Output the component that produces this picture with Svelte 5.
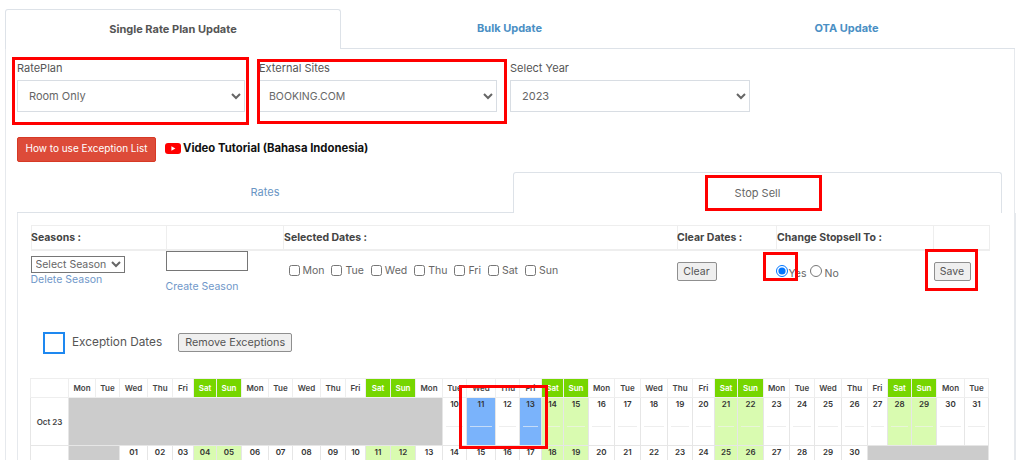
<script>
	const edges = [31, 69, 96, 120, 148, 173, 194, 217, 242, 269, 293, 321, 346, 366, 391, 416, 443, 467, 496, 520, 542, 564, 589, 615, 641, 668, 693, 715, 738, 764, 790, 815, 842, 868, 888, 912, 937, 965, 989];
	const widths = edges.slice(1).map((x, i) => x - edges[i]);
	const names = ['Mon', 'Tue', 'Wed', 'Thu', 'Fri', 'Sat', 'Sun'];
	const head = widths.slice(1).map((_, i) => names[i % 7]);
	const weekend = (col) => col % 7 === 5 || col % 7 === 6;
	const pad = (n) => String(n).padStart(2, '0');

	function days(from, to, startCol) {
		const out = [];
		for (let d = from; d <= to; d++) {
			out.push({ label: pad(d), col: startCol + d - from, selected: from === 10 && (d === 11 || d === 13) });
		}
		return out;
	}
	const october = days(10, 31, 15);
	const november = days(1, 30, 2);
</script>

<div class="page">
	<div class="tabs">
		<div class="tab active">Single Rate Plan Update</div>
		<div class="tab">Bulk Update</div>
		<div class="tab">OTA Update</div>
	</div>

	<div class="panel">
		<div class="filters">
			<div class="field one">
				<span class="field-label">RatePlan</span>
				<select><option>Room Only</option></select>
			</div>
			<div class="field two">
				<span class="field-label">External Sites</span>
				<select><option>BOOKING.COM</option></select>
			</div>
			<div class="field three">
				<span class="field-label">Select Year</span>
				<select><option>2023</option></select>
			</div>
		</div>

		<div class="help">
			<button class="red-btn">How to use Exception List</button>
			<svg class="yt" width="16" height="11" viewBox="0 0 16 11">
				<rect width="16" height="11" rx="3" fill="#f00" />
				<path d="M6.4 3.2v4.6l4-2.3z" fill="#fff" />
			</svg>
			<span class="video">Video Tutorial (Bahasa Indonesia)</span>
		</div>

		<div class="subtabs">
			<div class="subtab">Rates</div>
			<div class="subtab active">Stop Sell</div>
		</div>

		<div class="subpanel">
			<table class="controls">
				<colgroup>
					<col style="width:135px" />
					<col style="width:117px" />
					<col style="width:394px" />
					<col style="width:99px" />
					<col style="width:157px" />
					<col style="width:56px" />
				</colgroup>
				<thead>
					<tr>
						<th class="flush">Seasons :</th>
						<th></th>
						<th>Selected Dates :</th>
						<th class="flush">Clear Dates :</th>
						<th>Change Stopsell To :</th>
						<th></th>
					</tr>
				</thead>
				<tbody>
					<tr>
						<td>
							<select class="season"><option>Select Season</option></select>
							<div class="link delete">Delete Season</div>
						</td>
						<td>
							<input class="season-name" type="text" />
							<div class="link create">Create Season</div>
						</td>
						<td>
							<div class="weekdays">
								{#each names as name}
									<label><input type="checkbox" />{name}</label>
								{/each}
							</div>
						</td>
						<td><button class="plain clear">Clear</button></td>
						<td>
							<div class="radios">
								<input type="radio" name="stopsell" checked /><span>Yes</span>
								<input type="radio" name="stopsell" /><span>No</span>
							</div>
						</td>
						<td><button class="plain save">Save</button></td>
					</tr>
				</tbody>
			</table>

			<div class="exceptions">
				<span class="swatch"></span>
				<span class="exc-label">Exception Dates</span>
				<button class="plain remove">Remove Exceptions</button>
			</div>

			<table class="calendar">
				<colgroup>
					{#each widths as w}
						<col style="width:{w}px" />
					{/each}
				</colgroup>
				<thead>
					<tr>
						<th></th>
						{#each head as name, i}
							<th class:wk={weekend(i)}>{name}</th>
						{/each}
					</tr>
				</thead>
				<tbody>
					<tr class="week">
						<td class="month">Oct 23</td>
						<td class="past" colspan="15"></td>
						{#each october as d}
							<td class="day" class:green={weekend(d.col)} class:picked={d.selected}>
								{d.label}<i></i>
							</td>
						{/each}
					</tr>
					<tr class="week">
						<td class="month"></td>
						<td class="past" colspan="2"></td>
						{#each november as d}
							<td class="day" class:green={weekend(d.col)}>{d.label}<i></i></td>
						{/each}
						<td class="past" colspan="5"></td>
					</tr>
				</tbody>
			</table>
		</div>
	</div>

	<span class="mark m1"></span>
	<span class="mark m2"></span>
	<span class="mark m3"></span>
	<span class="mark m4"></span>
	<span class="mark m5"></span>
	<span class="mark m6"></span>
</div>

<style>
	:global(body) {
		margin: 0;
		background: #fff;
	}
	.page {
		position: relative;
		width: 1024px;
		height: 460px;
		overflow: hidden;
		box-sizing: border-box;
		padding: 9px 0 0 5px;
		font-family: Inter, "Open Sans", sans-serif;
		font-size: 11px;
		color: #555;
	}
	.tabs {
		display: grid;
		grid-template-columns: 336px 337px 337px;
		width: 1010px;
	}
	.tab {
		height: 39px;
		line-height: 38px;
		text-align: center;
		font-weight: 700;
		font-size: 11px;
		color: #4a8fc4;
		border-bottom: 1px solid #dde2e8;
	}
	.tab.active {
		color: #555;
		background: #fff;
		border: 1px solid #dde2e8;
		border-bottom: 0;
		border-radius: 3px 3px 0 0;
		box-sizing: content-box;
		height: 39px;
		width: 334px;
	}
	.panel {
		width: 1008px;
		height: 412px;
		border: 1px solid #e6e9ed;
		border-top: 0;
	}
	.filters {
		display: flex;
		padding: 11px 0 0 11px;
	}
	.field {
		display: flex;
		flex-direction: column;
	}
	.one { width: 242px; }
	.two { width: 251px; }
	.three { width: 240px; }
	.field-label {
		height: 20px;
		line-height: 17px;
		font-size: 11px;
		color: #555;
	}
	.field select {
		height: 32px;
		padding: 0 7px;
		font: 11px Inter, sans-serif;
		color: #666;
		background-color: #fff;
		border: 1px solid #d8dde3;
	}
	.one select { width: 228px; }
	.two select { width: 238px; padding: 0 5px; font-size: 10.5px; }
	.three select { width: 240px; }
	.help {
		display: flex;
		align-items: center;
		padding: 25px 0 0 11px;
	}
	.red-btn {
		width: 139px;
		height: 25px;
		padding: 0 0 3px;
		font: 10px Inter, sans-serif;
		color: #fff;
		background: #dd4b39;
		border: 1px solid #d73925;
		border-radius: 2px;
	}
	.yt {
		margin: -3px 2px 0 9px;
	}
	.video {
		margin-top: -3px;
		font-weight: 700;
		font-size: 11.3px;
		color: #111;
	}
	.subtabs {
		display: grid;
		grid-template-columns: 496px 489px;
		margin: 10px 0 0 11px;
	}
	.subtab {
		height: 40px;
		line-height: 40px;
		text-align: center;
		font-size: 11px;
		color: #6a95c4;
		border-bottom: 1px solid #dde2e8;
	}
	.subtab.active {
		color: #666;
		border: 1px solid #dde2e8;
		border-bottom: 0;
		border-radius: 3px 3px 0 0;
	}
	.subpanel {
		width: 984px;
		height: 260px;
		margin-left: 11px;
		border: 1px solid #e6e9ed;
		border-top: 0;
		padding: 12px 0 0 13px;
		box-sizing: content-box;
	}
	.controls {
		table-layout: fixed;
		width: 958px;
		border-collapse: collapse;
	}
	.controls th {
		height: 23px;
		padding: 0;
		font-size: 10.5px;
		font-weight: 700;
		text-align: left;
		color: #444;
		border: 1px solid #eee;
		border-bottom-width: 2px;
	}
	.controls th.flush {
		text-indent: -1px;
	}
	.controls td {
		padding: 0;
		vertical-align: top;
		height: 81px;
	}
	.season {
		display: block;
		width: 94px;
		height: 17px;
		margin: 5px 0 0 -1px;
		padding: 0;
		font: 10.5px Inter, sans-serif;
		color: #666;
		background: #fff;
		border: 1px solid #767676;
	}
	.link {
		font-size: 10.5px;
		color: #6f97c9;
	}
	.delete { margin: 0 0 0 -1px; line-height: 14px; }
	.season-name {
		display: block;
		box-sizing: border-box;
		width: 82px;
		height: 20px;
		margin-left: -1px;
		border: 1px solid #767676;
	}
	.create { margin: 9px 0 0 -1px; line-height: 14px; }
	.weekdays {
		display: flex;
		gap: 7px;
		padding: 13px 0 0 5px;
		font-size: 10.5px;
		color: #666;
	}
	.weekdays label {
		display: flex;
		align-items: center;
		gap: 3px;
	}
	.weekdays input {
		width: 11px;
		height: 11px;
		margin: 0;
	}
	.plain {
		padding: 0;
		font: 10.5px Inter, sans-serif;
		color: #555;
		background: #efefef;
		border: 1px solid #8f8f8f;
		border-radius: 2px;
	}
	.clear {
		height: 19px;
		width: 40px;
		margin: 11px 0 0 -1px;
	}
	.save {
		height: 19px;
		width: 37px;
		margin-top: 11px;
	}
	.radios {
		display: flex;
		align-items: center;
		margin-left: -1px;
		padding-top: 11px;
		font-size: 10.5px;
		color: #666;
	}
	.radios input {
		width: 12px;
		height: 12px;
		margin: 0 1px 0 0;
	}
	.radios span {
		margin: 5px 3px 0 0;
	}
	.radios span:last-child {
		margin-left: 2px;
	}
	.exceptions {
		display: flex;
		align-items: center;
		height: 22px;
		padding: 0 0 0 12px;
	}
	.swatch {
		box-sizing: border-box;
		width: 22px;
		height: 22px;
		border: 2px solid #1e88f0;
	}
	.exc-label {
		margin: -2px 0 0 7px;
		font-size: 11.8px;
	}
	.remove {
		width: 114px;
		height: 19px;
		margin: -2px 0 0 16px;
		font-size: 10.8px;
	}
	.calendar {
		table-layout: fixed;
		width: 959px;
		margin: 24px 0 0 -1px;
		border-collapse: collapse;
	}
	.calendar th {
		height: 18px;
		padding: 0;
		font-size: 8px;
		font-weight: 600;
		color: #444;
		border: 1px solid #eee;
	}
	.calendar th.wk {
		color: #fff;
		background: #76d600;
	}
	.calendar td {
		padding: 0;
		border: 1px solid #e6e6e6;
		font-size: 8px;
		font-weight: 600;
		color: #333;
		text-align: center;
	}
	.week {
		height: 48px;
	}
	td.past {
		background: #ccc;
	}
	td.month {
		color: #444;
	}
	td.day {
		position: relative;
		vertical-align: top;
		line-height: 12px;
	}
	td.day i {
		position: absolute;
		left: 3px;
		right: 3px;
		top: 28px;
		height: 1px;
		background: #eee;
	}
	td.green {
		background: #d9fbb0;
	}
	td.green i {
		background: #e8f5d8;
	}
	td.picked {
		background: #7ab3fb;
	}
	td.picked i {
		background: #c5dcf8;
	}
	.mark {
		position: absolute;
		box-sizing: border-box;
		border: 3px solid #f00;
		pointer-events: none;
	}
	.m1 { left: 12px; top: 57px; width: 237px; height: 68px; }
	.m2 { left: 257px; top: 59px; width: 250px; height: 65px; }
	.m3 { left: 705px; top: 175px; width: 117px; height: 36px; }
	.m4 { left: 763px; top: 252px; width: 35px; height: 29px; }
	.m5 { left: 925px; top: 249px; width: 53px; height: 42px; }
	.m6 { left: 459px; top: 385px; width: 89px; height: 64px; }
</style>
